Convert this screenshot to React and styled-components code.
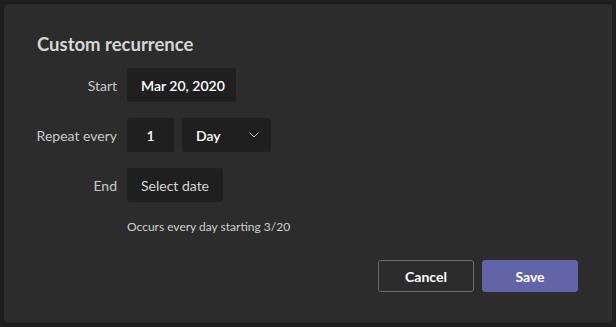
import React from 'react'
import styled, { createGlobalStyle } from 'styled-components'

const GlobalStyle = createGlobalStyle`
    html, body {
        margin: 0;
        padding: 0;
        background: #201f1f;
        font-family: Lato, "Noto Sans", sans-serif;
        -webkit-font-smoothing: antialiased;
    }
`

function Chevron() {
    return (
        <svg width="10" height="6" viewBox="0 0 10 6" fill="none">
            <polyline points="0.5,0.5 5,5 9.5,0.5" stroke="#c8c8c8" strokeWidth="1" />
        </svg>
    )
}

export default function App() {
    return (
        <>
            <GlobalStyle />
            <Page>
                <Dialog>
                    <Title>Custom recurrence</Title>
                    <Form>
                        <Label>Start</Label>
                        <Fields>
                            <Field width={109} strong>Mar 20, 2020</Field>
                        </Fields>

                        <Label>Repeat every</Label>
                        <Fields>
                            <Field width={47} strong center>1</Field>
                            <Field width={89} strong>
                                Day
                                <Chevron />
                            </Field>
                        </Fields>

                        <Label>End</Label>
                        <Fields>
                            <Field width={96}>Select date</Field>
                        </Fields>

                        <span />
                        <Hint>Occurs every day starting 3/20</Hint>
                    </Form>
                    <Footer>
                        <Button>Cancel</Button>
                        <Button primary>Save</Button>
                    </Footer>
                </Dialog>
            </Page>
        </>
    )
}

const Page = styled.div`
    width: 616px;
    height: 327px;
    padding: 4px 5px 4px 4px;
    box-sizing: border-box;
`

const Dialog = styled.div`
    height: 100%;
    box-sizing: border-box;
    background: #2d2c2c;
    border-radius: 4px;
    box-shadow: 0 0 2px rgba(0, 0, 0, 0.5), 1px 0 0 #3a3939;
    padding: 28px 33px 31px 33px;
    display: flex;
    flex-direction: column;
`

const Title = styled.h2`
    margin: 0;
    color: #d6d6d6;
    font-size: 18.5px;
    font-weight: 700;
    line-height: 24px;
    white-space: nowrap;
`

const Form = styled.div`
    display: grid;
    grid-template-columns: 80px auto;
    column-gap: 10px;
    row-gap: 16px;
    align-items: center;
    margin-top: 12px;
`

const Label = styled.div`
    color: #c8c8c8;
    font-size: 14px;
    white-space: nowrap;
    display: flex;
    justify-content: flex-end;
`

const Fields = styled.div`
    display: flex;
    gap: 8px;
`

const Field = styled.div`
    width: ${p => p.width}px;
    height: 34px;
    box-sizing: border-box;
    background: #1f1f1f;
    border-radius: 3px;
    display: flex;
    align-items: center;
    justify-content: ${p => (p.center ? 'center' : 'space-between')};
    padding: 0 12px 0 ${p => (p.center ? 12 : 14)}px;
    color: ${p => (p.strong ? '#ffffff' : '#d6d6d6')};
    font-size: 14px;
    font-weight: ${p => (p.strong ? 600 : 400)};
    white-space: nowrap;
`

const Hint = styled.div`
    color: #cfcfcf;
    font-size: 12px;
    margin-top: 1px;
    white-space: nowrap;
`

const Footer = styled.div`
    margin-top: auto;
    display: flex;
    justify-content: flex-end;
    gap: 8px;
`

const Button = styled.button`
    width: 96px;
    height: 32px;
    border-radius: 3px;
    font-family: Lato, "Noto Sans", sans-serif;
    font-size: 14px;
    font-weight: 700;
    color: #ffffff;
    cursor: pointer;
    background: ${p => (p.primary ? '#6264a7' : 'transparent')};
    border: 1px solid ${p => (p.primary ? '#6264a7' : '#6b6a6a')};
`
